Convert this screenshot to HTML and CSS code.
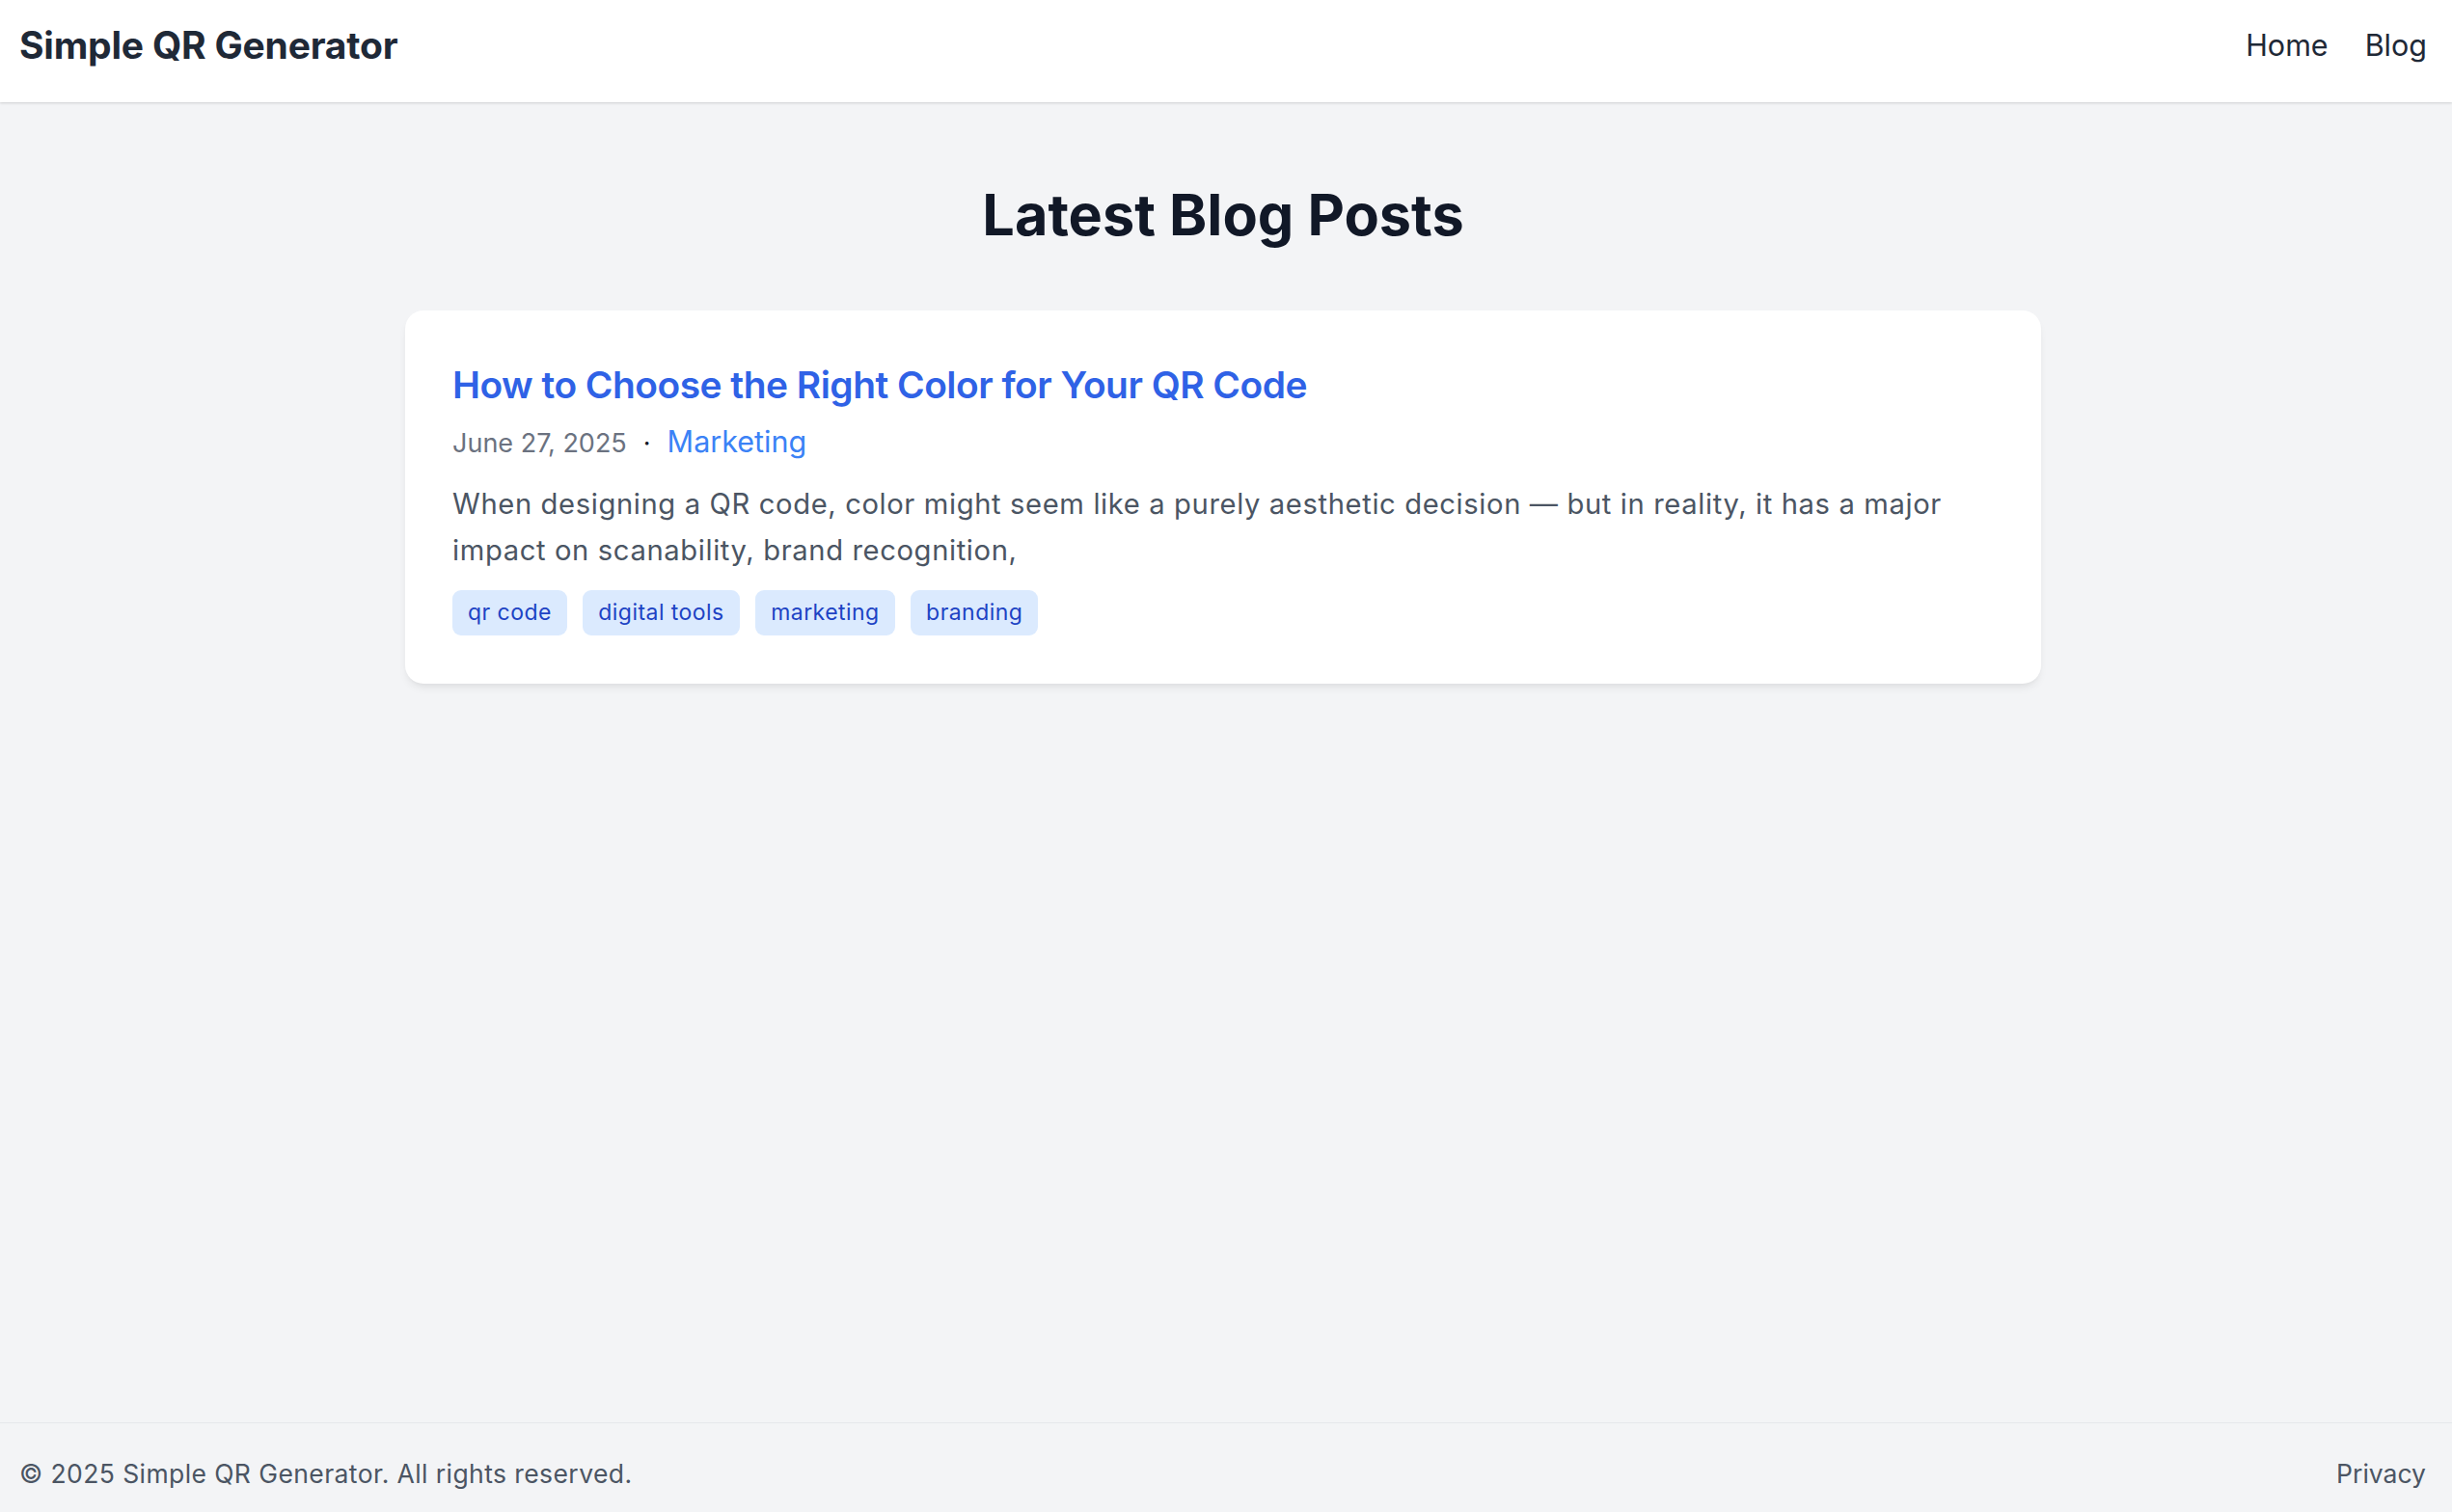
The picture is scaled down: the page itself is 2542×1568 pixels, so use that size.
FILE: index.html
```html
<!DOCTYPE html>
<html lang="en">
<head>
<meta charset="utf-8">
<title>Blog - Simple QR Generator</title>
<link rel="stylesheet" href="styles.css">
</head>
<body>
<div class="page">
  <header class="site-header">
    <a class="logo" href="#">Simple QR Generator</a>
    <nav class="nav">
      <a href="#">Home</a>
      <a href="#">Blog</a>
    </nav>
  </header>

  <main class="main">
    <h1 class="page-title">Latest Blog Posts</h1>
    <article class="post-card">
      <h2 class="post-title"><a href="#">How to Choose the Right Color for Your QR Code</a></h2>
      <div class="post-meta">
        <span class="post-date">June 27, 2025</span>
        <span class="post-sep">·</span>
        <a class="post-category" href="#">Marketing</a>
      </div>
      <p class="post-excerpt">When designing a QR code, color might seem like a purely aesthetic decision — but in reality, it has a major impact on scanability, brand recognition,</p>
      <ul class="tags">
        <li class="tag">qr code</li>
        <li class="tag">digital tools</li>
        <li class="tag">marketing</li>
        <li class="tag">branding</li>
      </ul>
    </article>
  </main>

  <footer class="site-footer">
    <span class="copyright">© 2025 Simple QR Generator. All rights reserved.</span>
    <a class="footer-link" href="#">Privacy</a>
  </footer>
</div>
</body>
</html>
```

FILE: styles.css
```css
* { box-sizing: border-box; }

html, body {
  margin: 0;
  padding: 0;
}

body {
  background: #f3f4f6;
  font-family: Inter, "Noto Sans", "Liberation Sans", sans-serif;
  color: #1f2937;
}

a { text-decoration: none; color: inherit; }

.page {
  min-height: 100vh;
  display: flex;
  flex-direction: column;
  margin-right: 6px;
}

.site-header {
  height: 106px;
  background: #ffffff;
  display: flex;
  justify-content: space-between;
  align-items: center;
  padding: 0 20px 14px 20px;
  box-shadow: 0 1px 3px rgba(0, 0, 0, 0.10), 0 1px 2px rgba(0, 0, 0, 0.06);
  position: relative;
  z-index: 1;
  margin-right: -6px;
}

.logo {
  font-size: 39px;
  font-weight: 700;
  color: #1f2937;
  letter-spacing: -0.2px;
}

.nav {
  display: flex;
  gap: 38px;
  font-size: 30.5px;
  color: #1f2937;
  margin-right: 6px;
}

.main {
  flex: 1;
  padding-top: 84px;
}

.page-title {
  margin: 0 0 67px;
  text-align: center;
  font-size: 59.4px;
  line-height: 64.8px;
  font-weight: 700;
  color: #111827;
}

.post-card {
  width: 1696px;
  margin: 0 auto;
  background: #ffffff;
  border-radius: 19px;
  padding: 48px 48px 50px 49px;
  box-shadow: 0 6px 10px -2px rgba(0, 0, 0, 0.07), 0 3px 6px -3px rgba(0, 0, 0, 0.05);
}

.post-title {
  margin: 0;
  font-size: 38.9px;
  line-height: 58px;
  font-weight: 600;
  color: #2f62e6;
  letter-spacing: -0.5px;
}

.post-meta {
  margin-top: 7px;
  display: flex;
  align-items: baseline;
  line-height: 45px;
}

.post-date {
  font-size: 27px;
  color: #6b7280;
}

.post-sep {
  font-size: 27px;
  color: #111827;
  margin: 0 17px;
}

.post-category {
  font-size: 30.5px;
  color: #3b82f6;
}

.post-excerpt {
  margin: 17px 0 0;
  font-size: 29.2px;
  line-height: 48.5px;
  letter-spacing: 0.62px;
  color: #4b5563;
}

.tags {
  list-style: none;
  margin: 16px 0 0;
  padding: 0;
  display: flex;
  gap: 16.5px;
}

.tag {
  background: #dbeafe;
  color: #1d43c4;
  font-size: 23px;
  letter-spacing: 0.45px;
  line-height: 33px;
  padding: 7px 16px;
  border-radius: 9px;
}

.site-footer {
  border-top: 1px solid #e5e7eb;
  display: flex;
  justify-content: space-between;
  align-items: center;
  padding: 33px 21px 20px 20px;
  font-size: 26.5px;
  line-height: 39px;
  color: #4b5563;
  margin-right: -6px;
}

.copyright {
  letter-spacing: 0.41px;
}

.footer-link {
  color: #4b5563;
  margin-right: 6px;
}
```
